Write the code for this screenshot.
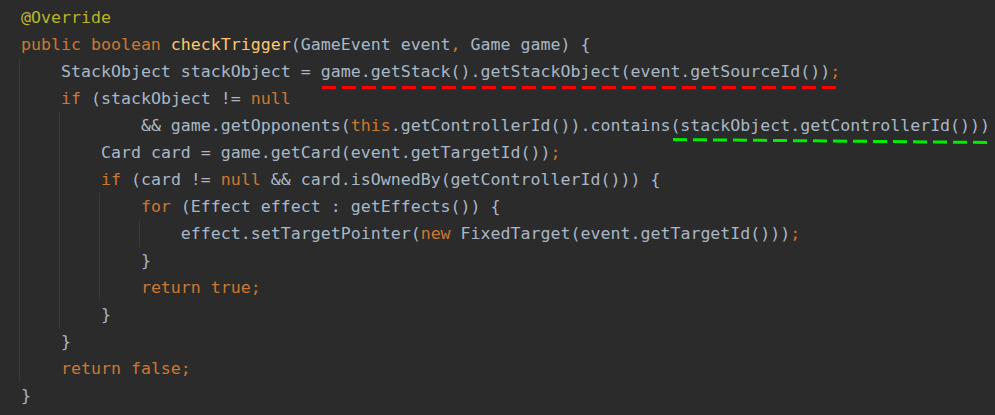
import React from "react";

const C = {
  t: "text-[#a9b7c6]",
  k: "text-[#cc7832]",
  a: "text-[#bbb529]",
  m: "text-[#ffc66d]",
};

type Tok = [keyof typeof C, string];

const guideLeft: Record<number, string> = {
  0: "left-[19px]",
  4: "left-[59px]",
  8: "left-[99px]",
  12: "left-[139px]",
};

const lines: { indent: number; guides: number[]; toks: Tok[] }[] = [
  { indent: 0, guides: [], toks: [["a", "@Override"]] },
  {
    indent: 0,
    guides: [],
    toks: [
      ["k", "public boolean "],
      ["m", "checkTrigger"],
      ["t", "(GameEvent event"],
      ["k", ","],
      ["t", " Game game) {"],
    ],
  },
  {
    indent: 4,
    guides: [0],
    toks: [
      ["t", "StackObject stackObject = game.getStack().getStackObject(event.getSourceId())"],
      ["k", ";"],
    ],
  },
  {
    indent: 4,
    guides: [0],
    toks: [
      ["k", "if "],
      ["t", "(stackObject != "],
      ["k", "null"],
    ],
  },
  {
    indent: 12,
    guides: [0, 4],
    toks: [
      ["t", "&& game.getOpponents("],
      ["k", "this"],
      ["t", ".getControllerId()).contains(stackObject.getControllerId()))"],
    ],
  },
  {
    indent: 8,
    guides: [0, 4],
    toks: [
      ["t", "Card card = game.getCard(event.getTargetId())"],
      ["k", ";"],
    ],
  },
  {
    indent: 8,
    guides: [0, 4],
    toks: [
      ["k", "if "],
      ["t", "(card != "],
      ["k", "null "],
      ["t", "&& card.isOwnedBy(getControllerId())) {"],
    ],
  },
  {
    indent: 12,
    guides: [0, 4, 8],
    toks: [
      ["k", "for "],
      ["t", "(Effect effect : getEffects()) {"],
    ],
  },
  {
    indent: 16,
    guides: [0, 4, 8, 12],
    toks: [
      ["t", "effect.setTargetPointer("],
      ["k", "new "],
      ["t", "FixedTarget(event.getTargetId()))"],
      ["k", ";"],
    ],
  },
  { indent: 12, guides: [0, 4, 8], toks: [["t", "}"]] },
  { indent: 12, guides: [0, 4, 8], toks: [["k", "return true;"]] },
  { indent: 8, guides: [0, 4], toks: [["t", "}"]] },
  { indent: 4, guides: [0], toks: [["t", "}"]] },
  { indent: 4, guides: [0], toks: [["k", "return false;"]] },
  { indent: 0, guides: [], toks: [["t", "}"]] },
];

function Dashes({ width, color, drop }: { width: number; color: string; drop: number }) {
  return (
    <svg width={width} height={4 + drop} viewBox={`0 0 ${width} ${4 + drop}`}>
      <line
        x1={0}
        y1={1.5}
        x2={width}
        y2={1.5 + drop}
        stroke={color}
        strokeWidth={3}
        strokeDasharray="14 6"
      />
    </svg>
  );
}

export default function App() {
  return (
    <div className="relative h-[415px] w-[995px] overflow-hidden bg-[#2b2b2b] pt-[4px] font-['DejaVu_Sans_Mono',monospace] text-[16.6px] leading-[27px]">
      {lines.map((line, i) => (
        <div key={i} className="relative h-[27px] whitespace-pre pl-[21px]">
          {line.guides.map((g) => (
            <span
              key={g}
              className={`absolute top-0 h-full w-px bg-[#393939] ${guideLeft[g]}`}
            />
          ))}
          <span>{" ".repeat(line.indent)}</span>
          {line.toks.map(([c, s], j) => (
            <span key={j} className={C[c]}>
              {s}
            </span>
          ))}
        </div>
      ))}

      {/* annotation marks */}
      <div className="absolute left-[322px] top-[85.5px]">
        <Dashes width={516} color="#ff0000" drop={0} />
      </div>
      <div className="absolute left-[673px] top-[137.5px]">
        <Dashes width={316} color="#00ee00" drop={3} />
      </div>
    </div>
  );
}
